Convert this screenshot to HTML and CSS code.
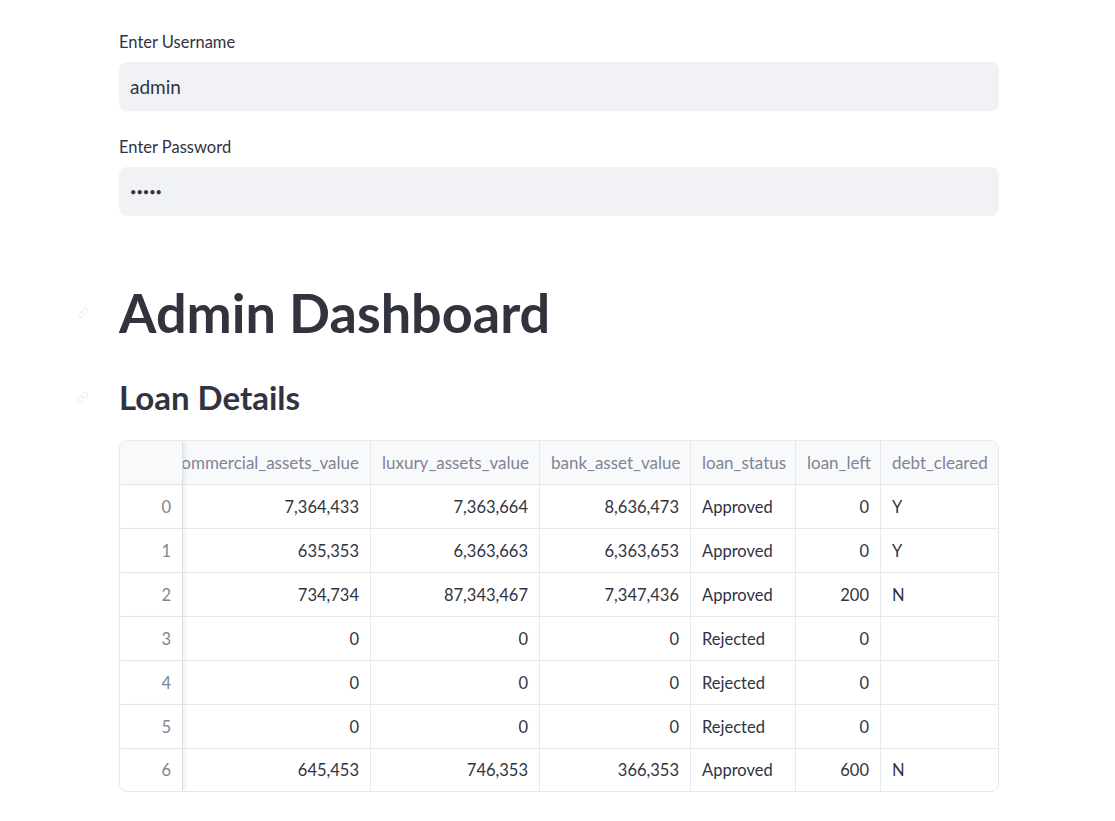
FILE: index.html
```html
<!DOCTYPE html>
<html>
<head>
<meta charset="utf-8">
<link rel="stylesheet" href="styles.css">
</head>
<body>
<main class="main">
  <div class="field">
    <label class="label">Enter Username</label>
    <input class="input" type="text" value="admin">
  </div>
  <div class="field">
    <label class="label">Enter Password</label>
    <input class="input pw" type="password" value="admin">
  </div>

  <h1 class="title">
    <span class="anchor"><svg viewBox="0 0 24 24" width="12" height="12"><path d="M10 13a5 5 0 0 0 7.5.5l3-3a5 5 0 0 0-7-7l-1.7 1.7M14 11a5 5 0 0 0-7.5-.5l-3 3a5 5 0 0 0 7 7l1.7-1.7" fill="none" stroke="currentColor" stroke-width="2" stroke-linecap="round"/></svg></span>
    Admin Dashboard
  </h1>
  <h3 class="subtitle">
    <span class="anchor"><svg viewBox="0 0 24 24" width="12" height="12"><path d="M10 13a5 5 0 0 0 7.5.5l3-3a5 5 0 0 0-7-7l-1.7 1.7M14 11a5 5 0 0 0-7.5-.5l-3 3a5 5 0 0 0 7 7l1.7-1.7" fill="none" stroke="currentColor" stroke-width="2" stroke-linecap="round"/></svg></span>
    Loan Details
  </h3>

  <div class="grid">
    <div class="cell hd idx"></div>
    <div class="cell hd clip"><span>commercial_assets_value</span></div>
    <div class="cell hd">luxury_assets_value</div>
    <div class="cell hd">bank_asset_value</div>
    <div class="cell hd">loan_status</div>
    <div class="cell hd">loan_left</div>
    <div class="cell hd last">debt_cleared</div>

    <div class="cell idx">0</div><div class="cell num">7,364,433</div><div class="cell num">7,363,664</div><div class="cell num">8,636,473</div><div class="cell">Approved</div><div class="cell num">0</div><div class="cell last">Y</div>
    <div class="cell idx">1</div><div class="cell num">635,353</div><div class="cell num">6,363,663</div><div class="cell num">6,363,653</div><div class="cell">Approved</div><div class="cell num">0</div><div class="cell last">Y</div>
    <div class="cell idx">2</div><div class="cell num">734,734</div><div class="cell num">87,343,467</div><div class="cell num">7,347,436</div><div class="cell">Approved</div><div class="cell num">200</div><div class="cell last">N</div>
    <div class="cell idx">3</div><div class="cell num">0</div><div class="cell num">0</div><div class="cell num">0</div><div class="cell">Rejected</div><div class="cell num">0</div><div class="cell last"></div>
    <div class="cell idx">4</div><div class="cell num">0</div><div class="cell num">0</div><div class="cell num">0</div><div class="cell">Rejected</div><div class="cell num">0</div><div class="cell last"></div>
    <div class="cell idx">5</div><div class="cell num">0</div><div class="cell num">0</div><div class="cell num">0</div><div class="cell">Rejected</div><div class="cell num">0</div><div class="cell last"></div>
    <div class="cell idx end">6</div><div class="cell num end">645,453</div><div class="cell num end">746,353</div><div class="cell num end">366,353</div><div class="cell end">Approved</div><div class="cell num end">600</div><div class="cell last end">N</div>
  </div>
</main>
</body>
</html>
```

FILE: styles.css
```css
* { box-sizing: border-box; }
html, body {
  margin: 0;
  background: #ffffff;
  color: #31333f;
  font-family: "Lato", "Noto Sans", sans-serif;
}
.main {
  width: 880px;
  margin-left: 119px;
  padding-top: 32px;
  padding-bottom: 28px;
  position: relative;
}
.field { display: flex; flex-direction: column; margin-bottom: 26px; }
.label {
  font-size: 16.5px;
  line-height: 21px;
  margin-bottom: 9px;
  color: #31333f;
}
.input {
  height: 49px;
  border: none;
  outline: none;
  border-radius: 8px;
  background: #f0f2f6;
  padding: 0 11px;
  font-family: inherit;
  font-size: 19px;
  color: #31333f;
}
.pw { font-size: 11px; letter-spacing: 0px; }

.title {
  position: relative;
  margin: 67px 0 0 0;
  font-size: 54px;
  line-height: 60px;
  font-weight: 700;
  color: #31333f;
}
.subtitle {
  position: relative;
  margin: 34px 0 23px 0;
  font-size: 33px;
  line-height: 40px;
  font-weight: 700;
  color: #31333f;
}
.anchor {
  position: absolute;
  left: -42px;
  top: 50%;
  margin-top: -6px;
  color: #ececec;
  display: flex;
}

.grid {
  display: grid;
  grid-template-columns: 63px 188px 169px 151px 105px 85px 1fr;
  border: 1px solid #e6e9ef;
  border-radius: 8px;
  overflow: hidden;
  font-size: 16.5px;
}
.cell {
  height: 44px;
  display: flex;
  align-items: center;
  padding: 0 11px;
  border-right: 1px solid #e6e9ef;
  border-bottom: 1px solid #e6e9ef;
  white-space: nowrap;
  color: #31333f;
}
.cell.last { border-right: none; }
.cell.end { border-bottom: none; height: 42px; }
.hd {
  background: #f8f9fb;
  color: #808495;
  height: 44px;
  font-size: 17px;
}
.clip {
  overflow: hidden;
  justify-content: flex-end;
}
.num { justify-content: flex-end; }
.idx {
  justify-content: flex-end;
  color: #808495;
  position: relative;
  border-right: 1px solid #dcdfe5;
  box-shadow: 3px 0 4px -1px rgba(0,0,0,0.08);
  z-index: 1;
}
.hd.idx { background: #f8f9fb; }
```
